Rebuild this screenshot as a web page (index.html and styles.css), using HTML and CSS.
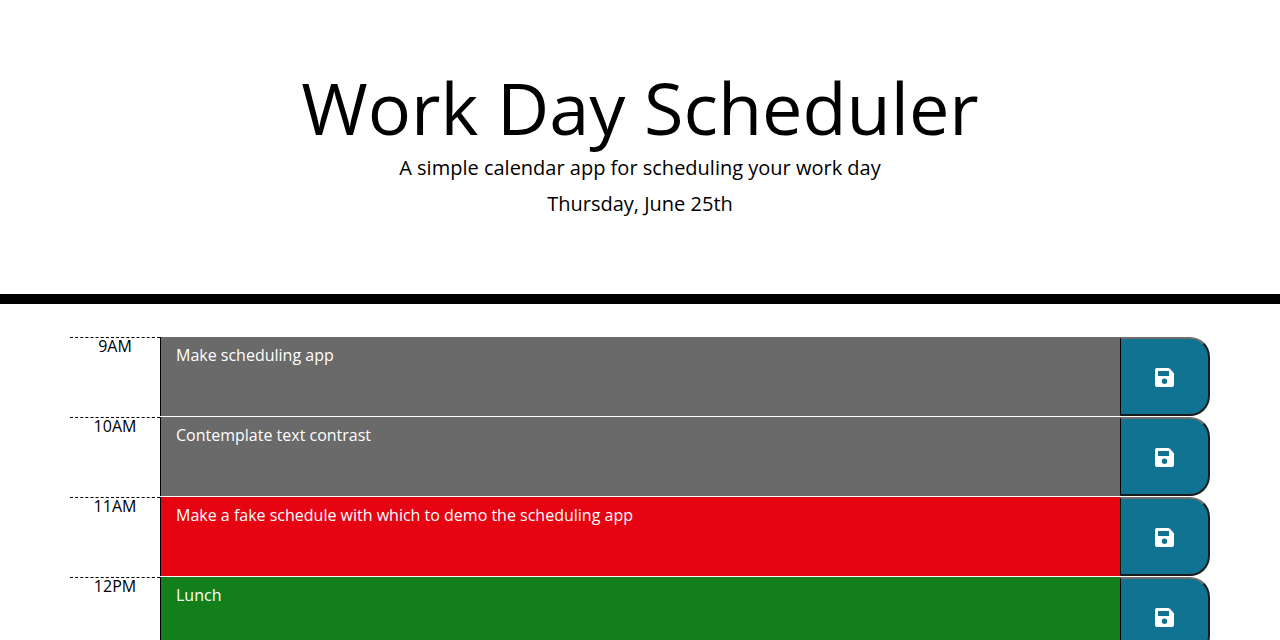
FILE: index.html
```html
<!DOCTYPE html>
<html lang="en">
<head>
<meta charset="utf-8">
<meta name="viewport" content="width=device-width, initial-scale=1">
<title>Work Day Scheduler</title>
<link rel="stylesheet" href="styles.css">
</head>
<body>
<svg class="sprite" aria-hidden="true">
  <symbol id="save" viewBox="0 0 19 19">
    <path fill-rule="evenodd" d="M2 0H13.200Q14 0 14.600 .6L18.400 4.400Q19 5 19 5.800V17a2 2 0 0 1-2 2H2a2 2 0 0 1-2-2V2a2 2 0 0 1 2-2ZM3 3V8H14V3ZM9.500 10.500a2.700 2.700 0 1 0 0 5.400a2.700 2.700 0 1 0 0-5.400Z"/>
  </symbol>
</svg>
<header class="jumbotron">
  <h1 class="title">Work Day Scheduler</h1>
  <p class="lead">A simple calendar app for scheduling your work day</p>
  <p class="lead">Thursday, June 25th</p>
</header>
<main class="container">
  <div class="row">
    <label class="hour" for="hour-9">9AM</label>
    <textarea class="entry past" id="hour-9">Make scheduling app</textarea>
    <button class="save-btn" type="button" aria-label="Save 9AM"><svg class="icon"><use href="#save"/></svg></button>
  </div>
  <div class="row">
    <label class="hour" for="hour-10">10AM</label>
    <textarea class="entry past" id="hour-10">Contemplate text contrast</textarea>
    <button class="save-btn" type="button" aria-label="Save 10AM"><svg class="icon"><use href="#save"/></svg></button>
  </div>
  <div class="row">
    <label class="hour" for="hour-11">11AM</label>
    <textarea class="entry present" id="hour-11">Make a fake schedule with which to demo the scheduling app</textarea>
    <button class="save-btn" type="button" aria-label="Save 11AM"><svg class="icon"><use href="#save"/></svg></button>
  </div>
  <div class="row">
    <label class="hour" for="hour-12">12PM</label>
    <textarea class="entry future" id="hour-12">Lunch</textarea>
    <button class="save-btn" type="button" aria-label="Save 12PM"><svg class="icon"><use href="#save"/></svg></button>
  </div>
</main>
</body>
</html>
```
FILE: styles.css
```css
*, *::before, *::after {
  box-sizing: border-box;
}

body {
  margin: 0;
  font-family: "Open Sans", sans-serif;
  font-size: 16px;
  line-height: 1;
  color: #000;
  background: #fff;
}

.sprite {
  display: none;
}

.jumbotron {
  padding: 64px 32px 72px;
  border-bottom: 10px solid #000;
  text-align: center;
}

.title {
  margin: 0;
  font-size: 72px;
  font-weight: 400;
  line-height: 86px;
}

.lead {
  margin: 0;
  font-size: 20px;
  line-height: 36px;
}

.container {
  max-width: 1140px;
  margin: 33px auto 0;
}

.row {
  display: grid;
  grid-template-columns: 90px 1fr 90px;
  min-height: 79px;
  margin-bottom: 1px;
}

.hour {
  border-top: 1px dashed #000;
  text-align: center;
}

.entry {
  display: block;
  width: 100%;
  margin: 0;
  padding: 6px 15px;
  border: 0;
  border-left: 1px solid #000;
  border-radius: 0;
  outline: 0;
  font: inherit;
  line-height: 24px;
  color: #fff;
  resize: none;
}

.past {
  background: #6a6a6a;
}

.present {
  background: #e60412;
}

.future {
  background: #127f1a;
}

.save-btn {
  display: flex;
  align-items: center;
  justify-content: center;
  padding: 2px 0 0;
  border: 2px solid #1a1a1a;
  border-top-color: #6e6e6e;
  border-left: 1px solid #000;
  border-radius: 0 20px 20px 0;
  background: #0f7391;
  color: #fff;
}

.icon {
  width: 19px;
  height: 19px;
  fill: currentColor;
}
```
